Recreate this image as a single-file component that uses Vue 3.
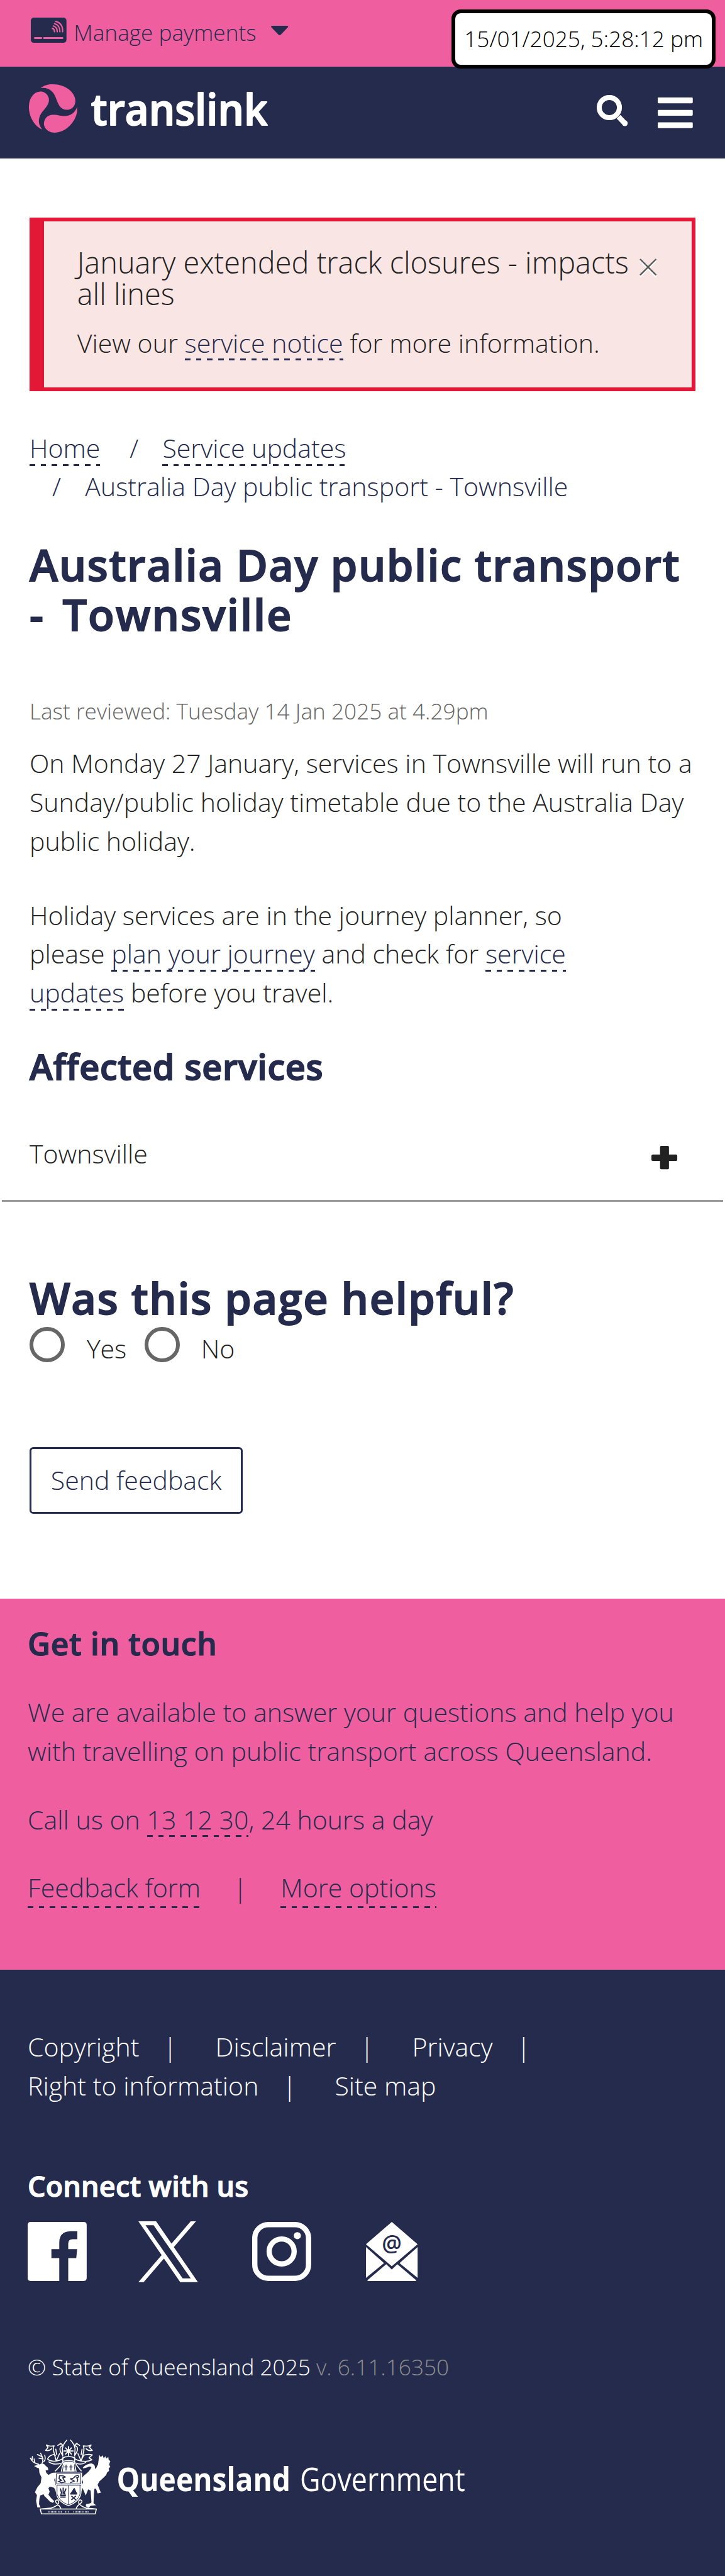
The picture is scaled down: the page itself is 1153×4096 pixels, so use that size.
<script setup>
const links = [
  ['Copyright', 'Disclaimer', 'Privacy'],
  ['Right to information', 'Site map'],
]
const blades = [0, 120, 240]
</script>

<template>
  <div class="page">
    <div class="topbar">
      <svg class="card" viewBox="0 0 58 41">
        <rect width="58" height="41" rx="5" fill="#252b4c" />
        <path d="M5.5 33.3H18M20.5 33.3H52.5" stroke="#ef5fa0" stroke-width="3" />
        <g fill="none" stroke="#ef5fa0" stroke-width="2.2" stroke-linecap="round">
          <path d="M35 17.5Q38.5 18.5 38.5 23" />
          <path d="M36.5 13.6Q43 15.5 43 23" />
          <path d="M38.5 9.8Q47.5 12.5 47.3 23" />
          <path d="M40.7 6.3Q52.5 9.5 51.7 23" />
        </g>
      </svg>
      <span class="pay">Manage payments</span>
      <svg class="caret" viewBox="0 0 28 16"><path d="M2 0H26Q29 0 27.3 2.6L15.8 14.6Q14 16.2 12.2 14.6L.7 2.6Q-1 0 2 0Z" fill="#252b4c" /></svg>
      <div class="clock">15/01/2025, 5:28:12 pm</div>
    </div>

    <header class="header">
      <svg class="brand" viewBox="0 0 400 80">
        <path
          v-for="a in blades"
          :key="a"
          :transform="`rotate(${a} 38.5 39)`"
          d="M17.8 6.3C23 2 30 0 38 0C58 0 74.5 13 74.5 27C74.5 35 69 41.5 60.5 41.5C50 41.5 46.5 32 43.5 24C40 13 32 4 17.8 6.3Z"
          fill="#ef5fa0"
        />
        <text class="wordmark" x="100" y="66" textLength="287" lengthAdjust="spacingAndGlyphs">translink</text>
      </svg>
      <svg class="search" viewBox="0 0 51 51">
        <circle cx="20.5" cy="20.5" r="16.4" fill="none" stroke="#fff" stroke-width="8.2" />
        <path d="M35.5 35.5L46 46.5" stroke="#fff" stroke-width="8.5" />
        <circle cx="45.8" cy="46" r="4.6" fill="#fff" />
      </svg>
      <svg class="menu" viewBox="0 0 57 50">
        <path d="M1.5 0H55.5Q57 0 57 1.5V8Q57 9.5 55.5 9.5H1.5Q0 9.5 0 8V1.5Q0 0 1.5 0ZM1.5 20.2H55.5Q57 20.2 57 21.7V28.2Q57 29.7 55.5 29.7H1.5Q0 29.7 0 28.2V21.7Q0 20.2 1.5 20.2ZM1.5 40.4H55.5Q57 40.4 57 41.9V48.4Q57 49.9 55.5 49.9H1.5Q0 49.9 0 48.4V41.9Q0 40.4 1.5 40.4Z" fill="#fff" />
      </svg>
    </header>

    <main class="main">
      <section class="alert">
        <h4>January extended track closures - impacts<br>all lines</h4>
        <p>View our <a class="lnk">service notice</a> for more information.</p>
        <svg class="close" viewBox="0 0 28 31">
          <path d="M1 4L27 30M27 4L1 30" stroke="#fff" stroke-width="2.4" />
          <path d="M1 1L27 27M27 1L1 27" stroke="#555" stroke-width="2.4" />
        </svg>
      </section>

      <ul class="crumbs">
        <li><a class="lnk">Home</a></li>&#32;<li><a class="lnk">Service updates</a></li><br><li>Australia Day public transport - Townsville</li>
      </ul>

      <h1 class="round h1"><span class="l1">Australia Day public transport</span><br><span class="l2">- Townsville</span></h1>
      <p class="reviewed">Last reviewed: Tuesday 14 Jan 2025 at 4.29pm</p>
      <p class="para">On Monday 27 January, services in Townsville will run to a<br>Sunday/public holiday timetable due to the Australia Day<br>public holiday.</p>
      <p class="para second">Holiday services are in the journey planner, so<br>please <a class="lnk">plan your journey</a> and check for <a class="lnk">service<br>updates</a> before you travel.</p>
      <h2 class="round h2">Affected services</h2>

      <div class="accordion">
        <span>Townsville</span>
        <svg class="plus" viewBox="0 0 42 38"><path d="M16 0H27Q28.500 0 28.500 2V14H40Q42 14 42 16V22.500Q42 24.500 40 24.500H28.500V36Q28.500 38 27 38H16Q14 38 14 36V24.500H2Q0 24.500 0 22.500V16Q0 14 2 14H14V2Q14 0 16 0Z" fill="#222" /></svg>
      </div>

      <h2 class="round helpful">Was this page helpful?</h2>
      <div class="radios">
        <i class="radio"></i><span class="yes">Yes</span>
        <i class="radio"></i><span class="no">No</span>
      </div>
      <button class="send">Send feedback</button>
    </main>

    <section class="touch">
      <h3 class="round h3">Get in touch</h3>
      <p class="intro">We are available to answer your questions and help you<br>with travelling on public transport across Queensland.</p>
      <p>Call us on <a class="lnk">13 12 30</a>, 24 hours a day</p>
      <p class="opts"><a class="lnk">Feedback form</a><span class="bar">|</span><a class="lnk">More options</a></p>
    </section>

    <footer class="footer">
      <nav>
        <div v-for="(row, r) in links" :key="r" class="row">
          <template v-for="l in row" :key="l">
            <a>{{ l }}</a><span v-if="l !== 'Site map'" class="sep">|</span>
          </template>
        </div>
      </nav>
      <h3 class="round connect">Connect with us</h3>
      <div class="social">
        <svg width="96" height="96" viewBox="0 0 96 96">
          <path fill="#fff" d="M5 0H91Q96 0 96 5V91Q96 96 91 96H66V58.700H79L80.500 44.300H66V35Q66 28 73 28H80.800V15H70Q51.400 15 51.400 34V44.300H38.600V58.700H51.400V96H5Q0 96 0 91V5Q0 0 5 0Z" />
        </svg>
        <svg class="x" width="97" height="99" viewBox="0 0 1200 1227">
          <path fill="#fff" d="M714.163 519.284L1160.890 0H1055.030L667.137 450.887L357.328 0H0L468.492 681.821L0 1226.370H105.866L515.491 750.218L842.672 1226.370H1200L714.137 519.284ZM569.165 687.828L521.697 619.934L144.011 79.694H306.615L611.412 515.685L658.880 583.579L1055.080 1150.300H892.476L569.165 687.854Z" />
        </svg>
        <svg class="ig" width="96" height="96" viewBox="0 0 96 96">
          <rect x="4.300" y="4.300" width="87.400" height="87.400" rx="22" fill="none" stroke="#fff" stroke-width="8.600" />
          <circle cx="48" cy="48" r="20.300" fill="none" stroke="#fff" stroke-width="8.600" />
          <circle cx="73.500" cy="22.300" r="5.800" fill="#fff" />
        </svg>
        <svg class="mail" width="84" height="96" viewBox="0 0 84 96">
          <path fill="#fff" d="M42 0L84 36.300L42 72L0 36.300ZM0 41L29.400 67L0 91ZM84 41L54.600 67L84 91ZM2 95L33 68.700L42 77.500L51 68.700L82 95Q81 96 80 96H4Q3 96 2 95Z" />
          <text class="at" x="42" y="48" text-anchor="middle">@</text>
        </svg>
      </div>
      <p class="copy">© State of Queensland 2025 <span>v. 6.11.16350</span></p>
      <svg class="gov" width="720" height="124" viewBox="144 74 2160 372">
        <g fill="#fff">
          <!-- stag -->
          <path d="M166 206L190 199L198 196L214 196L222 204L233 214L236 226L222 228L226 240L236 250L254 240L270 238V262L264 274L270 290L268 314L244 306L236 314L242 332L236 346L250 364L264 378L258 386L244 380L216 352L212 344L196 350L192 366L190 392L198 408L182 408L176 376L180 348L170 334L182 310L198 290L202 262L192 240L190 218L180 214Z" />
          <!-- brolga -->
          <path d="M404 214Q424 194 446 194Q464 198 463 214L466 222L478 198L484 152L492 164L500 154L506 168L514 158L518 170L528 162L530 176L538 182L532 200L538 210L530 218L532 230L522 238L518 250L502 266L484 282L476 298L482 312L492 336L476 340L468 316L460 318L458 342L456 388L468 398L442 400L432 410L418 402L420 392L442 388L446 382L442 326L430 320L418 350L408 326L398 302L406 286L398 266L410 252Q438 232 446 212Q436 206 428 212L406 218Z" />
          <path d="M268 238H400V286Q400 296 404 312Q396 326 396 344Q386 384 334 402Q282 384 274 344Q272 324 264 314L272 296Z" />
          <!-- helmet -->
          <path d="M306 190Q334 180 364 190L374 234H296Z" />
        </g>
        <g fill="none" stroke="#fff" stroke-width="5" stroke-linejoin="round" stroke-linecap="round">
          <path d="M188 198Q160 192 148 168M156 180L158 160M170 190L166 172M204 196Q216 176 198 144M202 160L182 150M210 172L190 168M214 184Q224 176 218 154" />
          <path d="M226 104Q240 112 264 108Q256 120 262 136L274 182L290 146M226 104L234 116L222 130Q240 134 252 122M272 124L276 150M232 172Q250 190 290 178L308 170M232 172Q240 154 262 150L270 154M238 186Q262 204 300 192" />
          <path d="M444 104Q430 112 406 108Q412 120 408 136L396 182L380 146M444 104L436 116L450 130Q432 134 420 122M400 124L396 150M450 152Q430 146 408 154L394 182M450 152L434 166L448 176Q420 190 380 178L362 170M420 186Q400 204 370 192" />
          <path d="M326 80Q308 98 304 122L306 158M344 80Q362 98 366 122L364 158M282 106L296 96L306 104L294 114Q288 130 304 152M388 106L374 96L364 104L376 114Q382 130 366 152" />
          <path d="M306 166Q334 154 364 166V184Q334 176 306 184ZM306 188Q290 212 270 230M364 188Q380 212 396 230" />
          <path d="M334 112V154M312 133H356M320 118L348 148M348 118L320 148" stroke-width="6" />
          <path d="M196 416H470L464 440H202ZM196 416L246 412Q276 404 286 388Q288 370 276 372Q266 376 274 386Q290 400 296 412M470 416L424 412Q394 404 384 388Q382 370 394 372Q404 376 396 386Q376 400 372 412" />
          <path d="M234 430H300M318 430H338M358 430H434" stroke-width="8" stroke-linecap="butt" stroke-dasharray="3 4" />
        </g>
        <g fill="none" stroke="#252b4c" stroke-width="3">
          <path d="M322 200V228M314 211H330M346 200V228M338 211H354" stroke-width="4" />
          <path d="M300 190L308 206L304 234M368 190L362 206L366 234" />
          <path d="M266 236H402" />
          <path d="M274 244H394V294H276ZM276 300H396M334 302V394M278 300V344Q290 380 334 396Q378 380 390 344V300" />
          <path d="M290 254Q310 252 318 260L306 264L318 284L300 288L286 282L300 276L288 268ZM342 288L362 280L342 268Q358 270 366 256L380 252Q388 262 374 264Q384 274 374 286" stroke-width="5" />
          <path d="M294 316L300 336L296 350H318L314 336L322 316M308 312V346M294 358H320" stroke-width="6" />
          <path d="M362 314L342 344H376Z" fill="#252b4c" />
          <path d="M348 352L370 372M370 352L348 372" stroke-width="6" />
        </g>
        <text class="qld" x="569" y="328" textLength="848" lengthAdjust="spacingAndGlyphs">Queensland</text>
        <text class="gvt" x="1463" y="328" textLength="806" lengthAdjust="spacingAndGlyphs">Government</text>
      </svg>
    </footer>
  </div>
</template>

<style>
html { background: #252b4c; }
</style>

<style scoped>
.page {
  zoom: 0.978;
  width: 1179px;
  height: 4188px;
  background: #fff;
  font-family: "Open Sans", sans-serif;
  font-weight: 300;
  font-size: 42px;
  line-height: 63px;
  color: #222;
}
h1, h2, h3, h4, p, ul { margin: 0; padding: 0; font-weight: 300; }
svg { display: block; flex: none; overflow: visible; }

.round {
  font-weight: 600;
  color: #252b4c;
  -webkit-text-stroke: 1.800px currentColor;
  stroke-linejoin: round;
  white-space: nowrap;
}
.lnk {
  color: #252b4c;
  padding-bottom: 1px;
  background: repeating-linear-gradient(90deg, #252b4c 0 9px, transparent 9px 18px) left bottom / 100% 3.100px no-repeat;
  -webkit-box-decoration-break: clone;
  box-decoration-break: clone;
}

.topbar {
  position: relative;
  display: flex;
  align-items: flex-start;
  height: 108px;
  padding-left: 50px;
  background: #ef5fa0;
  color: #252b4c;
  box-sizing: border-box;
}
.card { width: 58px; height: 41px; margin-top: 29px; }
.pay { margin: 26px 0 0 12px; width: 321px; font-size: 36px; line-height: 54px; white-space: nowrap; }
.caret { width: 28px; height: 16px; margin-top: 42px; }
.clock {
  position: absolute;
  z-index: 2;
  left: 734px;
  top: 15px;
  width: 430px;
  height: 96px;
  box-sizing: border-box;
  border: 6.200px solid #000;
  border-radius: 15px;
  background: #fff;
  color: #000;
  font-size: 36px;
  line-height: 82px;
  text-align: center;
  white-space: nowrap;
}

.header {
  display: flex;
  align-items: flex-start;
  height: 150px;
  background: #252b4c;
}
.brand { width: 400px; height: 80px; margin: 29px 0 0 48px; }
.wordmark {
  font: 600 70px "Open Sans", sans-serif;
  fill: #fff;
  stroke: #fff;
  stroke-width: 2;
  stroke-linejoin: round;
}
.search { width: 51px; height: 51px; margin: 46px 0 0 522px; }
.menu { width: 57px; height: 50px; margin: 50px 0 0 49px; }

.main { height: 2341px; padding: 96px 48px 0; box-sizing: border-box; }
.alert {
  position: relative;
  height: 282px;
  box-sizing: border-box;
  border: 6.200px solid #e31836;
  border-left-width: 24px;
  background: #f9e5e3;
  padding: 42px 0 0 54px;
  white-space: nowrap;
}
.alert h4 { font-size: 48px; line-height: 51px; }
.alert p { margin-top: 22px; }
.close { position: absolute; left: 968px; top: 60px; width: 28px; height: 31px; }

.crumbs { list-style: none; margin-top: 61px; color: #252b4c; white-space: nowrap; }
.crumbs li { display: inline; }
.crumbs li + li::before, .crumbs br + li::before { content: "/"; display: inline-block; padding: 0 39px 0 37px; }

.h1, .helpful { font-size: 70px; line-height: 81px; }
.h1 { margin-top: 54px; }
.l1 { letter-spacing: 1.500px; }
.l2 { letter-spacing: 2px; word-spacing: 9px; }
.reviewed { margin-top: 90px; font-size: 36px; line-height: 54px; color: #666; }
.para { margin-top: 27px; white-space: nowrap; }
.second { margin-top: 58px; }
.h2 { margin-top: 57px; font-size: 57px; line-height: 63px; letter-spacing: 0.700px; }
.accordion {
  display: flex;
  justify-content: space-between;
  height: 109px;
  margin: 79px -45px 0;
  padding: 0 75px 0 45px;
  box-sizing: border-box;
  border-bottom: 3.100px solid #999;
}
.plus { width: 42px; height: 38px; margin-top: 18px; }
.helpful { margin-top: 116px; letter-spacing: 1.600px; }
.radios { display: flex; height: 57px; margin-top: 7px; }
.radio { width: 57px; height: 57px; box-sizing: border-box; border: 6.200px solid #666; border-radius: 50%; flex: none; }
.yes, .no { margin-top: 4px; }
.yes { width: 94px; margin-left: 36px; }
.no { margin-left: 35px; }
.send {
  display: block;
  width: 347px;
  height: 108px;
  margin-top: 138px;
  padding: 0;
  border: 3.100px solid #252b4c;
  border-radius: 6px;
  background: #fff;
  color: #252b4c;
  font: inherit;
}

.touch { height: 603px; padding: 42px 45px 0; box-sizing: border-box; background: #ef5fa0; color: #252b4c; white-space: nowrap; }
.h3 { font-size: 51px; line-height: 63px; -webkit-text-stroke-width: 1.200px; letter-spacing: 0.600px; }
.touch p { margin-top: 48px; }
.touch .intro { margin-top: 49px; }
.opts { display: flex; }
.bar { width: 130px; padding-left: 0; text-indent: 53px; }

.footer { height: 986px; padding: 95px 45px 0; box-sizing: border-box; background: #252b4c; color: #fff; }
.row { display: flex; height: 63px; white-space: nowrap; }
.sep { margin: 0 62px 0 39px; }
.connect { margin-top: 100px; color: #fff; font-size: 46px; line-height: 63px; -webkit-text-stroke-width: 1.200px; letter-spacing: 0.200px; }
.social { display: flex; height: 96px; margin-top: 27px; }
.x { margin: -1px 0 0 84px; }
.ig { margin-left: 88px; }
.mail { margin-left: 89px; }
.at { font: 600 36px "Open Sans", sans-serif; fill: #252b4c; }
.copy { margin-top: 112px; font-size: 36px; line-height: 54px; }
.copy span { color: #8c8c8c; }
.gov { margin: 90px 0 0 3px; }
.qld { font: 700 158px "Open Sans", sans-serif; fill: #fff; }
.gvt { font: 400 158px "Open Sans", sans-serif; fill: #fff; }
</style>
